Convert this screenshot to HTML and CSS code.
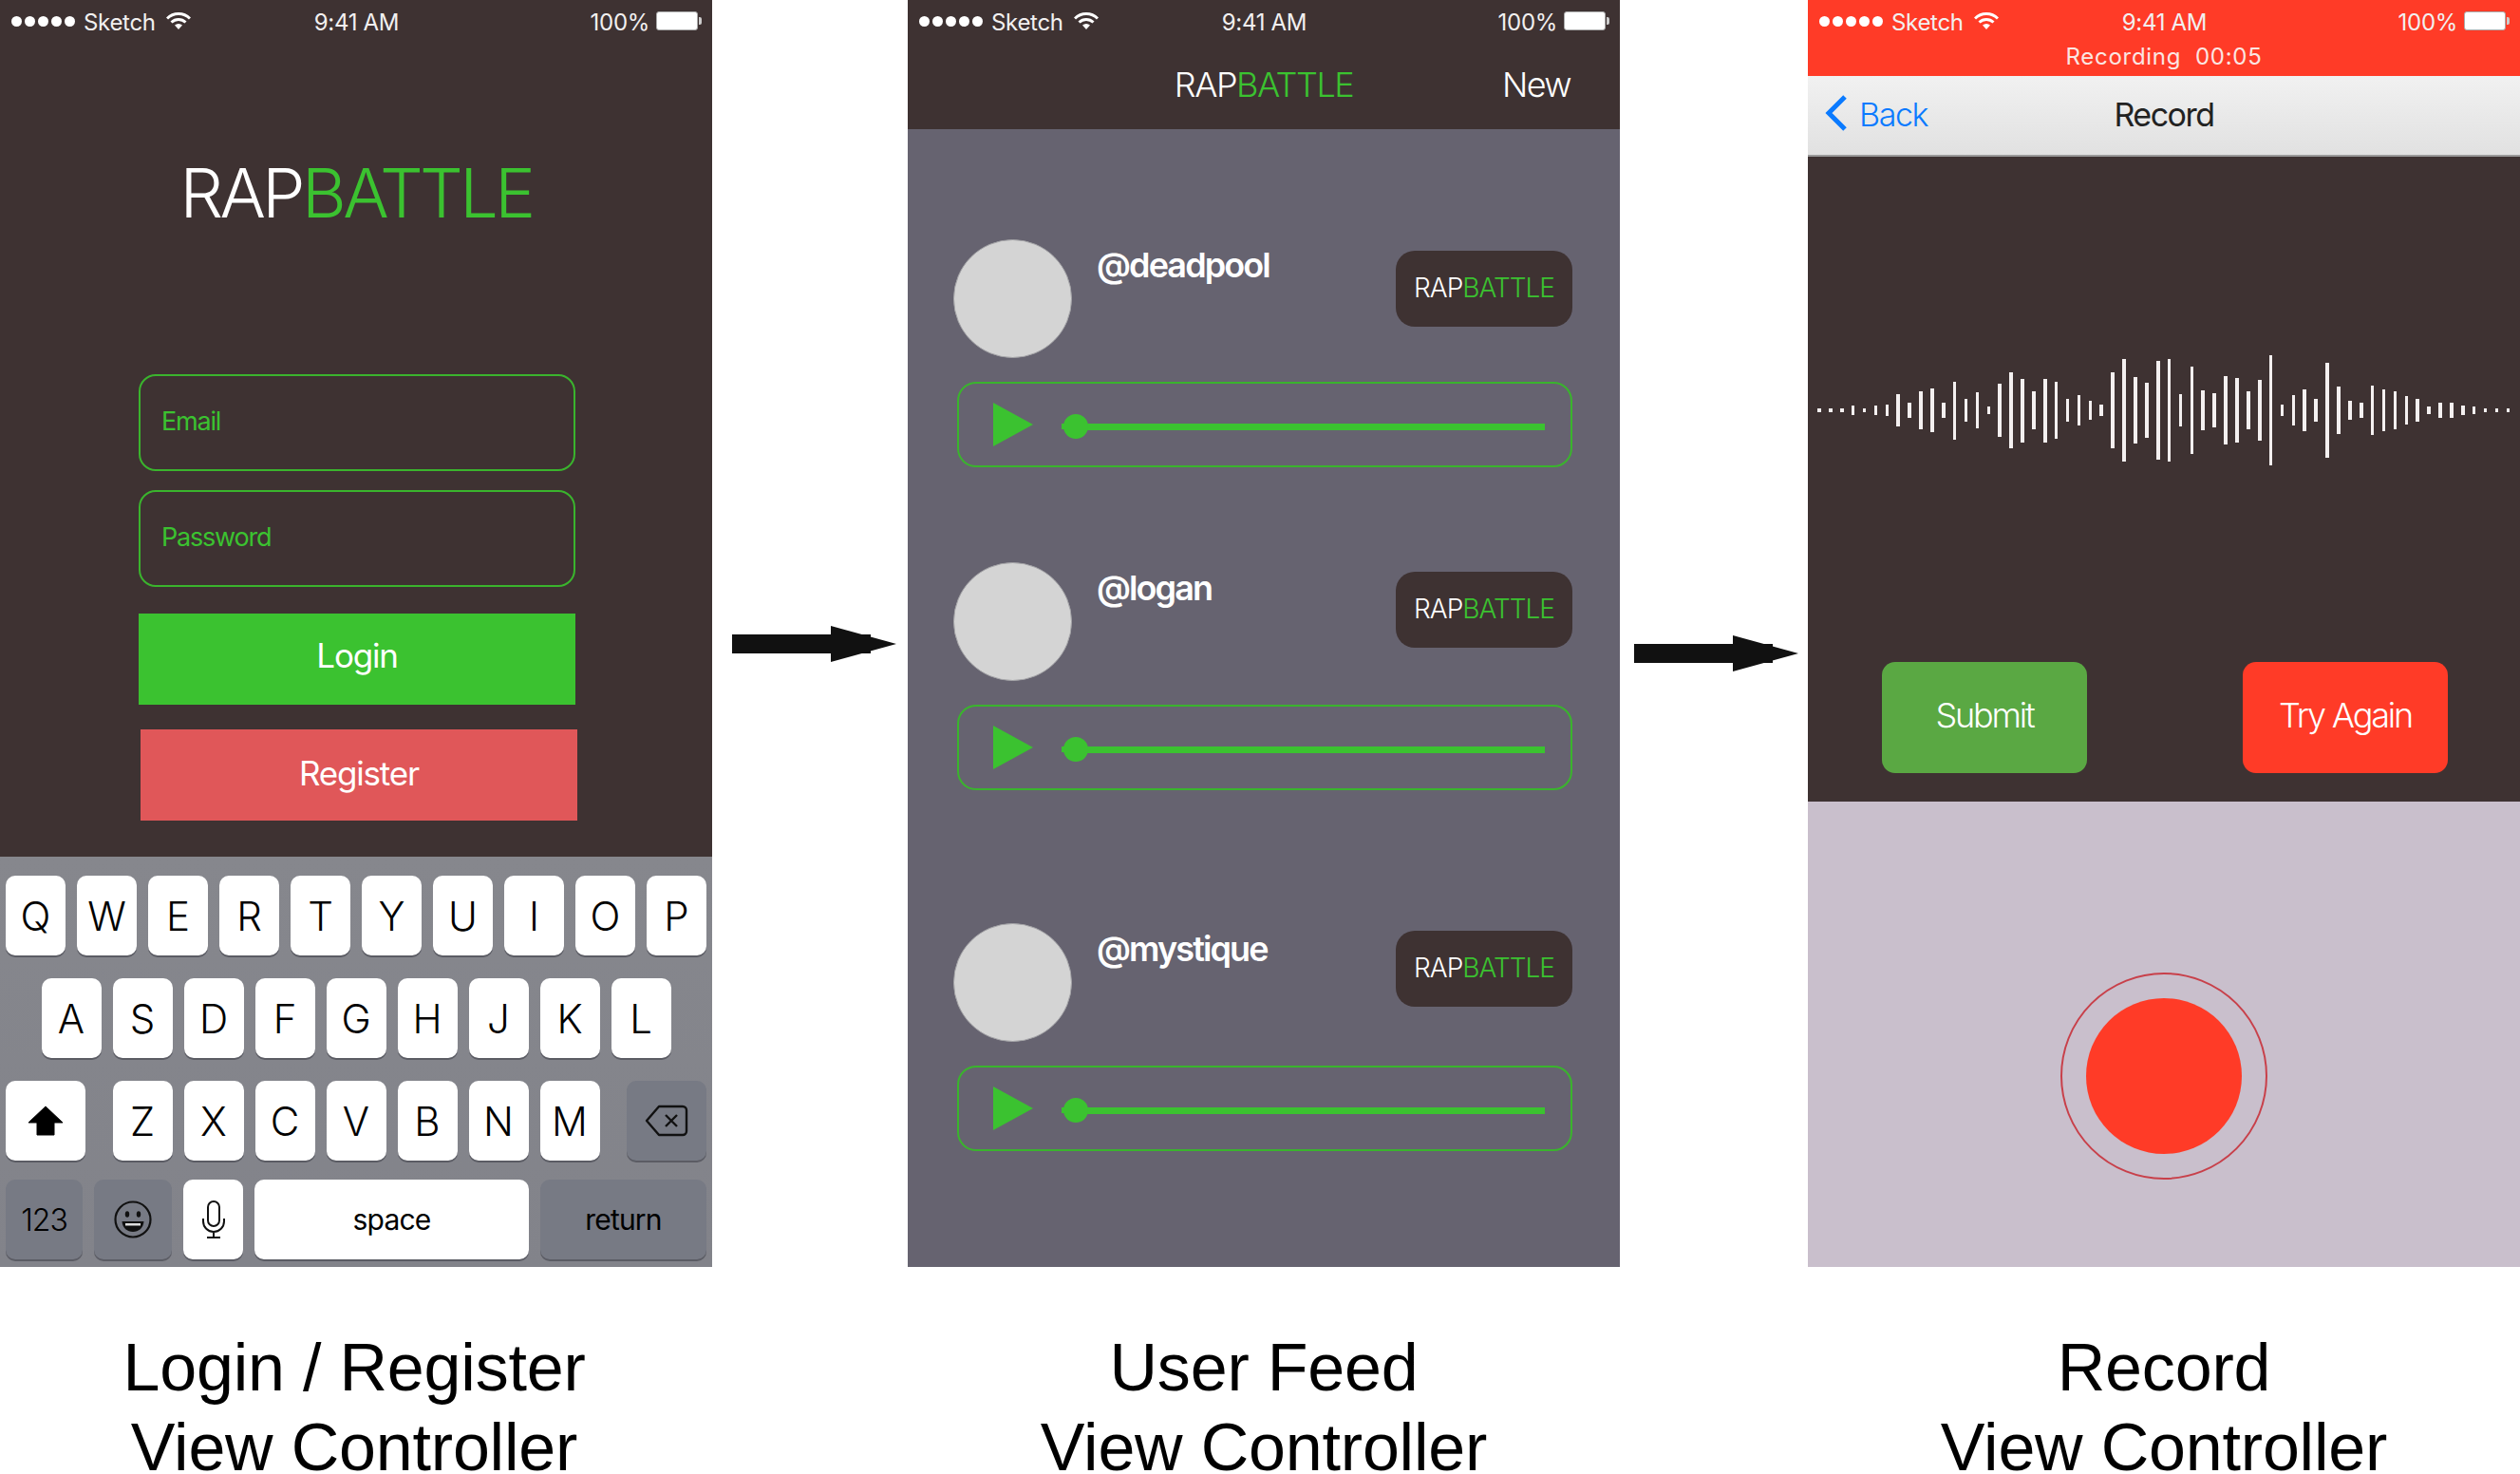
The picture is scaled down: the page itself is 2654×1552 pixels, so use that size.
FILE: index.html

```html
<!DOCTYPE html>
<html lang="en">
<head>
  <meta charset="UTF-8">
  <title>RapBattle view controllers</title>
  <link rel="stylesheet" href="styles.css">
</head>
<body>
  <div class="flow">

    <!-- login -->
    <div class="column">
      <div class="screen login">
        <div class="status">
          <div class="status-left">
            <span class="dots"><i></i><i></i><i></i><i></i><i></i></span>
            <span class="status-text">Sketch</span>
            <svg class="wifi" viewBox="0 0 26 18"><path d="M1 6.5a17 17 0 0 1 24 0M5.5 10.5a11 11 0 0 1 15 0" fill="none" stroke="currentColor" stroke-width="3"/><path d="M9 13.5a6 6 0 0 1 8 0L13 18z" fill="currentColor"/></svg>
          </div>
          <span class="status-text">9:41 AM</span>
          <div class="status-right">
            <span class="status-text">100%</span>
            <span class="battery"></span>
          </div>
        </div>
        <div class="logo"><span class="rap">RAP</span><span class="battle">BATTLE</span></div>
        <div class="form">
          <div class="field">Email</div>
          <div class="field">Password</div>
          <div class="btn-login">Login</div>
          <div class="btn-register">Register</div>
        </div>
        <div class="keyboard">
          <div class="key-row">
            <div class="key">Q</div><div class="key">W</div><div class="key">E</div><div class="key">R</div><div class="key">T</div><div class="key">Y</div><div class="key">U</div><div class="key">I</div><div class="key">O</div><div class="key">P</div>
          </div>
          <div class="key-row">
            <div class="key">A</div><div class="key">S</div><div class="key">D</div><div class="key">F</div><div class="key">G</div><div class="key">H</div><div class="key">J</div><div class="key">K</div><div class="key">L</div>
          </div>
          <div class="key-row split">
            <div class="key wide">
              <svg class="shift" viewBox="0 0 38 32"><path d="M19 1 37 18H28V31H10V18H1Z" fill="#000" stroke="#000" stroke-linejoin="round"/></svg>
            </div>
            <div class="key-group">
              <div class="key">Z</div><div class="key">X</div><div class="key">C</div><div class="key">V</div><div class="key">B</div><div class="key">N</div><div class="key">M</div>
            </div>
            <div class="key wide dark">
              <svg class="delete" viewBox="0 0 46 34"><path d="M15 2H40a4 4 0 0 1 4 4V28a4 4 0 0 1-4 4H15L2 17Z" fill="none" stroke="#111" stroke-width="2.4" stroke-linejoin="round"/><path d="M22 11 34 23M34 11 22 23" stroke="#111" stroke-width="2.4"/></svg>
            </div>
          </div>
          <div class="key-row bottom">
            <div class="key dark num">123</div>
            <div class="key dark emoji-key">
              <svg class="emoji" viewBox="0 0 40 40"><circle cx="20" cy="20" r="18.5" fill="none" stroke="#111" stroke-width="2.2"/><ellipse cx="14" cy="14.5" rx="2.2" ry="3.2" fill="#111"/><ellipse cx="26" cy="14.5" rx="2.2" ry="3.2" fill="#111"/><path d="M8.5 22H31.5C31 29 26 33 20 33S9 29 8.5 22Z" fill="#111"/><path d="M12 24H28V26.5H12Z" fill="#ddd"/></svg>
            </div>
            <div class="key mic-key">
              <svg class="mic" viewBox="0 0 26 40"><rect x="7" y="1" width="12" height="26" rx="6" fill="none" stroke="#111" stroke-width="2"/><path d="M2 19V22A11 11 0 0 0 24 22V19M13 33V39M6 39H20" fill="none" stroke="#111" stroke-width="2"/></svg>
            </div>
            <div class="key space">space</div>
            <div class="key dark return">return</div>
          </div>
        </div>
      </div>
      <div class="caption caption-login">Login / Register<br>View Controller</div>
    </div>

    <svg class="arrow first" viewBox="0 0 206 38"><path d="M21 9H167V29H21Z" fill="#111"/><path d="M125 0 194 19 125 38Z" fill="#111"/></svg>

    <!-- feed -->
    <div class="column">
      <div class="screen feed">
        <div class="feed-top">
          <div class="status">
            <div class="status-left">
              <span class="dots"><i></i><i></i><i></i><i></i><i></i></span>
              <span class="status-text">Sketch</span>
              <svg class="wifi" viewBox="0 0 26 18"><path d="M1 6.5a17 17 0 0 1 24 0M5.5 10.5a11 11 0 0 1 15 0" fill="none" stroke="currentColor" stroke-width="3"/><path d="M9 13.500a6 6 0 0 1 8 0L13 18z" fill="currentColor"/></svg>
            </div>
            <span class="status-text">9:41 AM</span>
            <div class="status-right">
              <span class="status-text">100%</span>
              <span class="battery"></span>
            </div>
          </div>
          <div class="feed-nav">
            <span></span>
            <div class="nav-logo"><span class="rap">RAP</span><span class="battle">BATTLE</span></div>
            <div class="nav-new">New</div>
          </div>
        </div>

        <div class="post post-one">
          <div class="post-head">
            <div class="avatar"></div>
            <div class="handle">@deadpool</div>
            <div class="chip"><span class="rap">RAP</span><span class="battle">BATTLE</span></div>
          </div>
          <div class="player">
            <svg class="play" viewBox="0 0 42 46"><path d="M0 0 42 23 0 46Z" fill="#3bc230"/></svg>
            <div class="slider"><span class="knob"></span><span class="track"></span></div>
          </div>
        </div>

        <div class="post post-two">
          <div class="post-head">
            <div class="avatar"></div>
            <div class="handle">@logan</div>
            <div class="chip"><span class="rap">RAP</span><span class="battle">BATTLE</span></div>
          </div>
          <div class="player">
            <svg class="play" viewBox="0 0 42 46"><path d="M0 0 42 23 0 46Z" fill="#3bc230"/></svg>
            <div class="slider"><span class="knob"></span><span class="track"></span></div>
          </div>
        </div>

        <div class="post post-three">
          <div class="post-head">
            <div class="avatar"></div>
            <div class="handle">@mystique</div>
            <div class="chip"><span class="rap">RAP</span><span class="battle">BATTLE</span></div>
          </div>
          <div class="player">
            <svg class="play" viewBox="0 0 42 46"><path d="M0 0 42 23 0 46Z" fill="#3bc230"/></svg>
            <div class="slider"><span class="knob"></span><span class="track"></span></div>
          </div>
        </div>
      </div>
      <div class="caption">User Feed<br>View Controller</div>
    </div>

    <svg class="arrow second" viewBox="0 0 198 38"><path d="M15 9H161V29H15Z" fill="#111"/><path d="M119 0 188 19 119 38Z" fill="#111"/></svg>

    <!-- record -->
    <div class="column">
      <div class="screen record">
        <div class="record-top">
          <div class="status">
            <div class="status-left">
              <span class="dots"><i></i><i></i><i></i><i></i><i></i></span>
              <span class="status-text">Sketch</span>
              <svg class="wifi" viewBox="0 0 26 18"><path d="M1 6.5a17 17 0 0 1 24 0M5.5 10.5a11 11 0 0 1 15 0" fill="none" stroke="currentColor" stroke-width="3"/><path d="M9 13.500a6 6 0 0 1 8 0L13 18z" fill="currentColor"/></svg>
            </div>
            <span class="status-text">9:41 AM</span>
            <div class="status-right">
              <span class="status-text">100%</span>
              <span class="battery"></span>
            </div>
          </div>
          <div class="recording">Recording&nbsp; 00:05</div>
        </div>
        <div class="record-nav">
          <div class="back">
            <svg class="chevron" viewBox="0 0 24 40"><path d="M21 3 4 20 21 37" fill="none" stroke="#0a7aff" stroke-width="5"/></svg>
            Back
          </div>
          <div class="nav-title">Record</div>
          <span></span>
        </div>
        <div class="record-main">
          <div class="wave">
            <i style="height:4px"></i><i style="height:4px"></i><i style="height:4px"></i><i style="height:10px"></i><i style="height:4px"></i><i style="height:10px"></i><i style="height:12px"></i><i style="height:34px"></i><i style="height:16px"></i><i style="height:40px"></i>
            <i style="height:46px"></i><i style="height:16px"></i><i style="height:61px"></i><i style="height:24px"></i><i style="height:38px"></i><i style="height:8px"></i><i style="height:56px"></i><i style="height:80px"></i><i style="height:67px"></i><i style="height:40px"></i>
            <i style="height:67px"></i><i style="height:60px"></i><i style="height:24px"></i><i style="height:32px"></i><i style="height:20px"></i><i style="height:12px"></i><i style="height:80px"></i><i style="height:108px"></i><i style="height:70px"></i><i style="height:58px"></i>
            <i style="height:104px"></i><i style="height:108px"></i><i style="height:34px"></i><i style="height:92px"></i><i style="height:42px"></i><i style="height:36px"></i><i style="height:72px"></i><i style="height:68px"></i><i style="height:40px"></i><i style="height:64px"></i>
            <i style="height:116px"></i><i style="height:12px"></i><i style="height:32px"></i><i style="height:44px"></i><i style="height:24px"></i><i style="height:100px"></i><i style="height:50px"></i><i style="height:20px"></i><i style="height:16px"></i><i style="height:52px"></i>
            <i style="height:44px"></i><i style="height:40px"></i><i style="height:30px"></i><i style="height:24px"></i><i style="height:8px"></i><i style="height:16px"></i><i style="height:16px"></i><i style="height:10px"></i><i style="height:8px"></i><i style="height:4px"></i>
            <i style="height:4px"></i><i style="height:4px"></i>
          </div>
          <div class="record-btns">
            <div class="btn-submit">Submit</div>
            <div class="btn-again">Try Again</div>
          </div>
        </div>
        <div class="record-pad">
          <div class="ring"><div class="dot"></div></div>
        </div>
      </div>
      <div class="caption">Record<br>View Controller</div>
    </div>

  </div>
</body>
</html>
```

FILE: styles.css

```css
* {
  box-sizing: border-box;
}
html, body {
  margin: 0;
  height: 1552px;
  overflow: hidden;
  background-color: #fff;
}
body {
  font-family: Inter, "Liberation Sans", sans-serif;
}
.flow {
  display: flex;
  align-items: flex-start;
}
.column {
  width: 750px;
  flex: none;
}
.screen {
  height: 1334px;
  display: flex;
  flex-direction: column;
  background-color: #3e3232;
  color: #fff;
}
.caption {
  height: 218px;
  padding-top: 64px;
  overflow: hidden;
  text-align: center;
  font-family: "Liberation Sans", sans-serif;
  font-size: 70px;
  line-height: 84px;
  letter-spacing: -0.2px;
  color: #000;
}
.caption-login {
  padding-right: 4px;
}

.arrow.first {
  width: 206px;
  height: 38px;
  flex: none;
  margin-top: 659px;
}
.arrow.second {
  width: 198px;
  height: 38px;
  flex: none;
  margin-top: 669px;
}

.rap {
  color: #fff;
}
.battle {
  color: #3bc230;
}

/* status bar */
.status {
  height: 40px;
  flex: none;
  display: grid;
  grid-template-columns: 1fr auto 1fr;
  align-items: center;
  padding: 0 11px 0 12px;
  color: #f2f0f0;
}
.status-left {
  display: flex;
  align-items: center;
}
.status-right {
  display: flex;
  align-items: center;
  justify-content: flex-end;
}
.status-text {
  font-size: 24px;
  line-height: 40px;
  padding-top: 4px;
  letter-spacing: -0.3px;
}
.dots {
  display: flex;
  gap: 3px;
  margin-right: 9px;
}
.dots i {
  width: 11px;
  height: 11px;
  border-radius: 50%;
  background-color: #fff;
}
.wifi {
  width: 26px;
  height: 18px;
  margin: 0 0 0 11px;
  color: #fff;
}
.battery {
  position: relative;
  width: 44px;
  height: 20px;
  margin: 0 4px 0 7px;
  background-color: #fff;
  border: 1px solid #aaa;
  border-radius: 3px;
}
.battery::after {
  content: "";
  position: absolute;
  right: -5px;
  top: 5px;
  width: 3px;
  height: 8px;
  background-color: #ccc;
  border-radius: 0 2px 2px 0;
}

/* login */
.logo {
  margin-top: 119px;
  height: 88px;
  text-align: center;
  font-size: 72px;
  font-weight: 300;
  line-height: 88px;
  letter-spacing: -3.6px;
}
.form {
  margin: 147px 0 0 146px;
  width: 462px;
  display: flex;
  flex-direction: column;
}
.field {
  width: 460px;
  height: 102px;
  margin-bottom: 20px;
  padding: 32px 0 0 22px;
  border: 2px solid #3ab42d;
  border-radius: 18px;
  font-size: 27px;
  line-height: 32px;
  letter-spacing: -1.2px;
  color: #3bc230;
}
.btn-login, .btn-register {
  width: 460px;
  height: 96px;
  display: flex;
  align-items: center;
  justify-content: center;
  font-size: 35px;
  letter-spacing: -1.2px;
}
.btn-login {
  margin-top: 8px;
  padding-bottom: 8px;
  background-color: #3bc230;
}
.btn-register {
  margin: 26px 0 0 2px;
  padding-bottom: 4px;
  background-color: #e05759;
}

/* keyboard */
.keyboard {
  margin-top: auto;
  height: 432px;
  padding-top: 20px;
  background: linear-gradient(#86878d, #82838a);
  color: #000;
}
.key-row {
  display: flex;
  justify-content: center;
  gap: 12px;
  margin-bottom: 24px;
}
.key-row.split {
  justify-content: space-between;
  padding: 0 6px;
  margin-bottom: 20px;
}
.key-row.bottom {
  justify-content: flex-start;
  padding-left: 6px;
}
.key-group {
  display: flex;
  gap: 12px;
}
.key {
  width: 63px;
  height: 84px;
  display: flex;
  align-items: center;
  justify-content: center;
  background-color: #fff;
  border-radius: 10px;
  box-shadow: 0 2px 0 #5b5c64;
  font-size: 42px;
  font-weight: 300;
}
.key.wide {
  width: 84px;
}
.key.dark {
  background-color: #777a84;
}
.key.num {
  width: 81px;
  font-size: 32px;
  letter-spacing: -1px;
}
.key.emoji-key {
  width: 82px;
}
.key.space {
  width: 289px;
  font-size: 30px;
  font-weight: 400;
  letter-spacing: -0.8px;
}
.key.return {
  width: 175px;
  font-size: 30px;
  font-weight: 400;
  letter-spacing: -0.8px;
}
.shift {
  width: 38px;
  height: 32px;
}
.delete {
  width: 46px;
  height: 34px;
}
.emoji {
  width: 40px;
  height: 40px;
}
.mic {
  width: 26px;
  height: 40px;
}

/* feed */
.feed {
  background-color: #666370;
}
.feed-top {
  height: 136px;
  flex: none;
  background-color: #3e3232;
}
.feed-nav {
  height: 96px;
  padding-top: 2px;
  display: grid;
  grid-template-columns: 1fr auto 1fr;
  align-items: center;
}
.nav-logo {
  font-size: 36px;
  font-weight: 300;
  letter-spacing: -1.5px;
}
.nav-new {
  justify-self: end;
  padding-right: 52px;
  font-size: 36px;
  font-weight: 300;
  letter-spacing: -1.6px;
}
.post {
  padding: 0 50px 0 48px;
}
.post-one {
  margin-top: 116px;
}
.post-two {
  margin-top: 100px;
}
.post-three {
  margin-top: 140px;
}
.post-head {
  display: flex;
  align-items: flex-start;
  height: 150px;
}
.avatar {
  width: 125px;
  height: 125px;
  flex: none;
  background-color: #d4d4d4;
  border: 1px solid #a5a5a8;
  border-radius: 50%;
}
.handle {
  flex: 1;
  margin: 5px 0 0 26px;
  font-size: 36px;
  line-height: 44px;
  font-weight: 600;
  letter-spacing: -1.9px;
}
.chip {
  width: 186px;
  height: 80px;
  margin-top: 12px;
  padding-bottom: 2px;
  display: flex;
  align-items: center;
  justify-content: center;
  background-color: #3e3232;
  border-radius: 20px;
  font-size: 28px;
  font-weight: 300;
  letter-spacing: -1px;
}
.post-two .chip {
  margin-top: 10px;
}
.post-three .chip {
  margin-top: 8px;
}
.player {
  margin-left: 4px;
  height: 90px;
  display: flex;
  align-items: center;
  padding: 0 27px 0 36px;
  border: 2px solid #3ab42d;
  border-radius: 20px;
}
.play {
  width: 42px;
  height: 46px;
  flex: none;
  margin-right: 32px;
}
.slider {
  flex: 1;
  display: flex;
  align-items: center;
  margin-top: 4px;
}
.knob {
  position: relative;
  width: 26px;
  height: 26px;
  flex: none;
  background-color: #3bc230;
  border-radius: 50%;
}
.knob::before {
  content: "";
  position: absolute;
  left: -2px;
  top: 10px;
  width: 6px;
  height: 6px;
  background-color: #3bc230;
}
.track {
  flex: 1;
  height: 7px;
  margin-left: -2px;
  background-color: #3bc230;
}

/* record */
.record-top {
  height: 80px;
  flex: none;
  background-color: #ff3b27;
}
.recording {
  height: 40px;
  text-align: center;
  font-size: 24px;
  line-height: 40px;
  letter-spacing: 0.7px;
  color: #fbe6e2;
}
.record-nav {
  height: 85px;
  flex: none;
  display: grid;
  grid-template-columns: 1fr auto 1fr;
  align-items: center;
  padding: 0 18px 3px;
  background: linear-gradient(#f1f1f1, #e1e1e1);
  border-bottom: 2px solid #9a9a9a;
}
.back {
  display: flex;
  align-items: center;
  gap: 12px;
  font-size: 34px;
  font-weight: 300;
  letter-spacing: -1.4px;
  color: #0a7aff;
}
.chevron {
  width: 24px;
  height: 40px;
  margin-top: -2px;
}
.nav-title {
  font-size: 34px;
  font-weight: 400;
  letter-spacing: -1.5px;
  color: #222;
}
.record-main {
  height: 679px;
  flex: none;
}
.wave {
  height: 140px;
  margin-top: 197px;
  padding-left: 10.2px;
  display: flex;
  align-items: center;
  gap: 8.3px;
}
.wave i {
  width: 3.6px;
  flex: none;
  background-color: #f4f0f0;
}
.record-btns {
  display: flex;
  gap: 164px;
  margin-top: 195px;
  padding-left: 78px;
}
.btn-submit, .btn-again {
  width: 216px;
  height: 117px;
  padding-bottom: 5px;
  display: flex;
  align-items: center;
  justify-content: center;
  border-radius: 14px;
  font-size: 36px;
  font-weight: 300;
  letter-spacing: -2.2px;
}
.btn-submit {
  background-color: #5aa843;
}
.btn-again {
  background-color: #ff3b27;
}
.record-pad {
  flex: 1;
  display: flex;
  justify-content: center;
  align-items: flex-start;
  padding-top: 180px;
  background-color: #c9bfcc;
}
.ring {
  width: 218px;
  height: 218px;
  display: flex;
  align-items: center;
  justify-content: center;
  border: 2px solid #c8404a;
  border-radius: 50%;
}
.dot {
  width: 164px;
  height: 164px;
  background-color: #ff3b27;
  border-radius: 50%;
}
```
